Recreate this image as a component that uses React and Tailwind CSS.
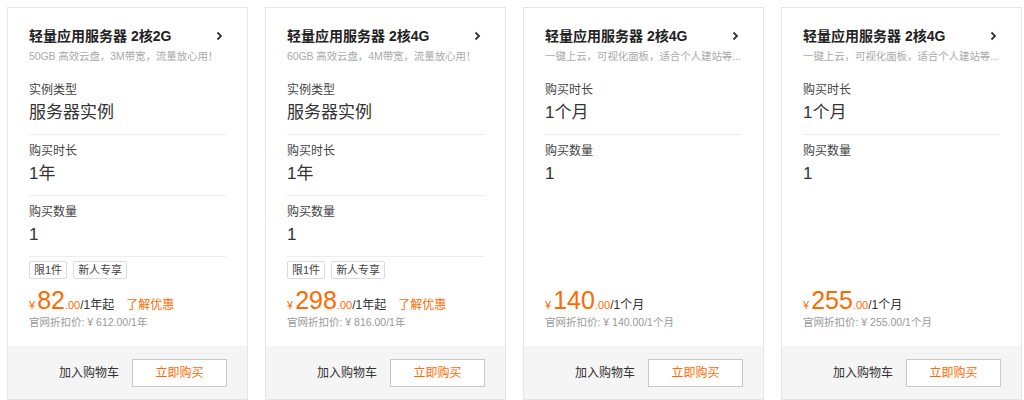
import React from 'react';

const cards = [
    {
        title: '轻量应用服务器 2核2G',
        desc: '50GB 高效云盘，3M带宽，流量放心用！',
        rows: [['实例类型', '服务器实例'], ['购买时长', '1年'], ['购买数量', '1']],
        tags: ['限1件', '新人专享'],
        price: '82', unit: '/1年起', promo: true,
        list: '官网折扣价: ¥ 612.00/1年',
    },
    {
        title: '轻量应用服务器 2核4G',
        desc: '60GB 高效云盘，4M带宽，流量放心用！',
        rows: [['实例类型', '服务器实例'], ['购买时长', '1年'], ['购买数量', '1']],
        tags: ['限1件', '新人专享'],
        price: '298', unit: '/1年起', promo: true,
        list: '官网折扣价: ¥ 816.00/1年',
    },
    {
        title: '轻量应用服务器 2核4G',
        desc: '一键上云，可视化面板，适合个人建站等...',
        rows: [['购买时长', '1个月'], ['购买数量', '1']],
        tags: [],
        price: '140', unit: '/1个月', promo: false,
        list: '官网折扣价: ¥ 140.00/1个月',
    },
    {
        title: '轻量应用服务器 2核4G',
        desc: '一键上云，可视化面板，适合个人建站等...',
        rows: [['购买时长', '1个月'], ['购买数量', '1']],
        tags: [],
        price: '255', unit: '/1个月', promo: false,
        list: '官网折扣价: ¥ 255.00/1个月',
    },
];

const Card = ({ c }) => (
    <div className="w-[241px] shrink-0 border border-[#e5e5e5] bg-white flex flex-col">
        <div className="h-[340px] px-[21px] pt-[18px] flex flex-col">
            <div className="flex items-center justify-between h-[20px]">
                <span className="text-[14px] font-bold text-[#222]">{c.title}</span>
                <svg width="7" height="10" viewBox="0 0 7 10" className="mr-[3px]">
                    <path d="M1.5 1.5 L5 5 L1.5 8.5" fill="none" stroke="#333" strokeWidth="1.8" />
                </svg>
            </div>
            <div className="mt-[2px] h-[16px] leading-[16px] text-[10.5px] tracking-[-0.1px] text-[#aaa] whitespace-nowrap">{c.desc}</div>
            <div className="mt-[10px]">
                {c.rows.map(([k, v], i) => (
                    <div key={i} className={`pt-[9px] pb-[9px] ${i < c.rows.length - 1 || c.tags.length ? 'border-b border-[#ececec]' : ''}`}>
                        <div className="text-[12px] leading-[14px] text-[#444]">{k}</div>
                        <div className="mt-[4px] text-[17px] leading-[24px] text-[#333]">{v}</div>
                    </div>
                ))}
            </div>
            <div className="mt-auto">
                {c.tags.length > 0 && (
                    <div className="flex gap-[6px] mb-[7px] mt-[1px]">
                        {c.tags.map((t) => (
                            <span key={t} className="px-[4px] h-[18px] leading-[16px] border border-[#dcdcdc] rounded-[2px] text-[11px] text-[#444]">{t}</span>
                        ))}
                    </div>
                )}
                <div className="h-[28px] flex items-baseline text-[#ff6a00]">
                    <span className="text-[11px] mr-[2px]">¥</span>
                    <span className="text-[25px] leading-[28px]">{c.price}</span>
                    <span className="text-[11px]">.00</span>
                    <span className="text-[12px] text-[#333]">{c.unit}</span>
                    {c.promo && <span className="text-[12px] ml-[12px]">了解优惠</span>}
                </div>
                <div className="h-[16px] leading-[16px] text-[10.5px] text-[#999] mb-[16px]">{c.list}</div>
            </div>
        </div>
        <div className="h-[53px] bg-[#f5f5f5] flex items-center justify-end pr-[20px] gap-[13px]">
            <span className="text-[12px] text-[#333]">加入购物车</span>
            <button className="w-[95px] h-[28px] bg-white border border-[#c9c9c9] text-[12px] text-[#ff6a00]">立即购买</button>
        </div>
    </div>
);

export default function App() {
    return (
        <div className="w-[1024px] h-[400px] overflow-hidden bg-white pt-[7px] pl-[7px] flex gap-[17px]" style={{ fontFamily: '"Liberation Sans", "Noto Sans CJK SC", sans-serif' }}>
            {cards.map((c, i) => <Card key={i} c={c} />)}
        </div>
    );
}
